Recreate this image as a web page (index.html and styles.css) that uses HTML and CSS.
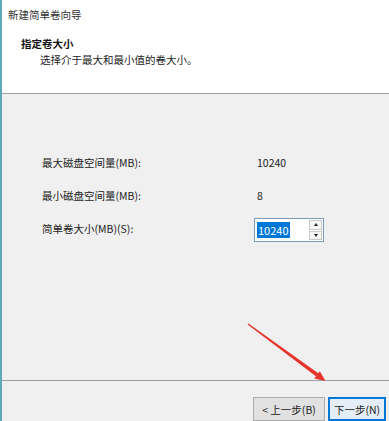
FILE: index.html
```html
<!DOCTYPE html>
<html lang="zh-CN">
<head>
<meta charset="utf-8">
<title>新建简单卷向导</title>
<link rel="stylesheet" href="styles.css">
</head>
<body>
<div class="window">
  <div class="header">
    <div class="title">新建简单卷向导</div>
    <div class="heading">指定卷大小</div>
    <div class="sub">选择介于最大和最小值的卷大小。</div>
  </div>
  <div class="body">
    <div class="grid">
      <div class="label">最大磁盘空间量(MB):</div>
      <div class="value">10240</div>
      <div class="label">最小磁盘空间量(MB):</div>
      <div class="value">8</div>
      <div class="label">简单卷大小(MB)(S):</div>
      <div class="spin">
        <div class="field"><span class="sel">10240</span></div>
        <div class="spinner">
          <div class="sbtn"><span class="tri up"></span></div>
          <div class="sbtn"><span class="tri down"></span></div>
        </div>
      </div>
    </div>
  </div>
  <div class="footer">
    <div class="btn">&lt; 上一步(B)</div>
    <div class="btn default">下一步(N)</div>
  </div>
  <svg class="arrow" width="389" height="421" viewBox="0 0 389 421">
    <polygon points="247.6,324.6 248.4,323.4 318.6,373.4 316.2,376.6" fill="#e5352d"/>
    <polygon points="325.5,381 314.2,378.6 319.8,371.2" fill="#e5352d"/>
  </svg>
</div>
</body>
</html>
```
FILE: styles.css
```css
html, body {
  margin: 0;
  padding: 0;
}
body {
  width: 389px;
  height: 421px;
  overflow: hidden;
  font-family: "Noto Sans CJK SC", "Noto Sans", sans-serif;
  font-size: 10.5px;
  color: #1a1a1a;
}
.window {
  position: relative;
  display: flex;
  flex-direction: column;
  height: 421px;
  border-left: 2px solid #5fa9b9;
  box-sizing: border-box;
}
.header {
  height: 93px;
  flex: none;
  background: #ffffff;
  border-bottom: 1px solid #a0a0a0;
  padding-top: 7px;
  box-sizing: border-box;
  height: 94px;
}
.title {
  line-height: 16px;
  padding-left: 6px;
  color: #333;
}
.heading {
  margin-top: 13px;
  line-height: 16px;
  padding-left: 19px;
  font-weight: bold;
  color: #111;
}
.sub {
  line-height: 16px;
  padding-left: 38px;
  color: #222;
}
.body {
  flex: 1;
  background: #f0f0f0;
  padding-top: 57px;
  padding-left: 40px;
}
.grid {
  display: grid;
  grid-template-columns: 212px auto;
  grid-auto-rows: 24px;
  row-gap: 9px;
  align-items: center;
}
.label, .value {
  line-height: 24px;
  color: #222;
}
.value {
  padding-left: 3px;
}
.spin {
  display: flex;
  width: 70px;
  height: 24px;
  box-sizing: border-box;
  border: 1px solid #7a9cc0;
  background: #fff;
  margin-top: 2px;
}
.field {
  flex: 1;
  display: flex;
  align-items: center;
  padding-left: 2px;
}
.sel {
  background: #0078d7;
  color: #fff;
  line-height: 16px;
  padding: 0 1px;
  font-size: 11px;
}
.spinner {
  width: 13px;
  display: flex;
  flex-direction: column;
  gap: 1px;
  padding: 1px 1px 1px 0;
}
.sbtn {
  flex: 1;
  border: 1px solid #c8c8c8;
  background: #f6f6f6;
  display: flex;
  align-items: center;
  justify-content: center;
}
.tri {
  width: 0;
  height: 0;
  border-left: 2.5px solid transparent;
  border-right: 2.5px solid transparent;
}
.tri.up {
  border-bottom: 3px solid #222;
}
.tri.down {
  border-top: 3px solid #222;
}
.footer {
  flex: none;
  height: 41px;
  box-sizing: border-box;
  background: #f0f0f0;
  border-top: 1px solid #a0a0a0;
  padding-top: 16px;
  padding-left: 251px;
  display: flex;
  gap: 3px;
}
.btn {
  height: 24px;
  box-sizing: border-box;
  width: 72px;
  border: 1px solid #adadad;
  background: #e1e1e1;
  display: flex;
  align-items: center;
  justify-content: center;
  color: #222;
}
.btn.default {
  width: 58px;
  border: 2px solid #0078d7;
  background: #e5eef6;
}
.arrow {
  position: absolute;
  left: -2px;
  top: 0;
  pointer-events: none;
}
```
